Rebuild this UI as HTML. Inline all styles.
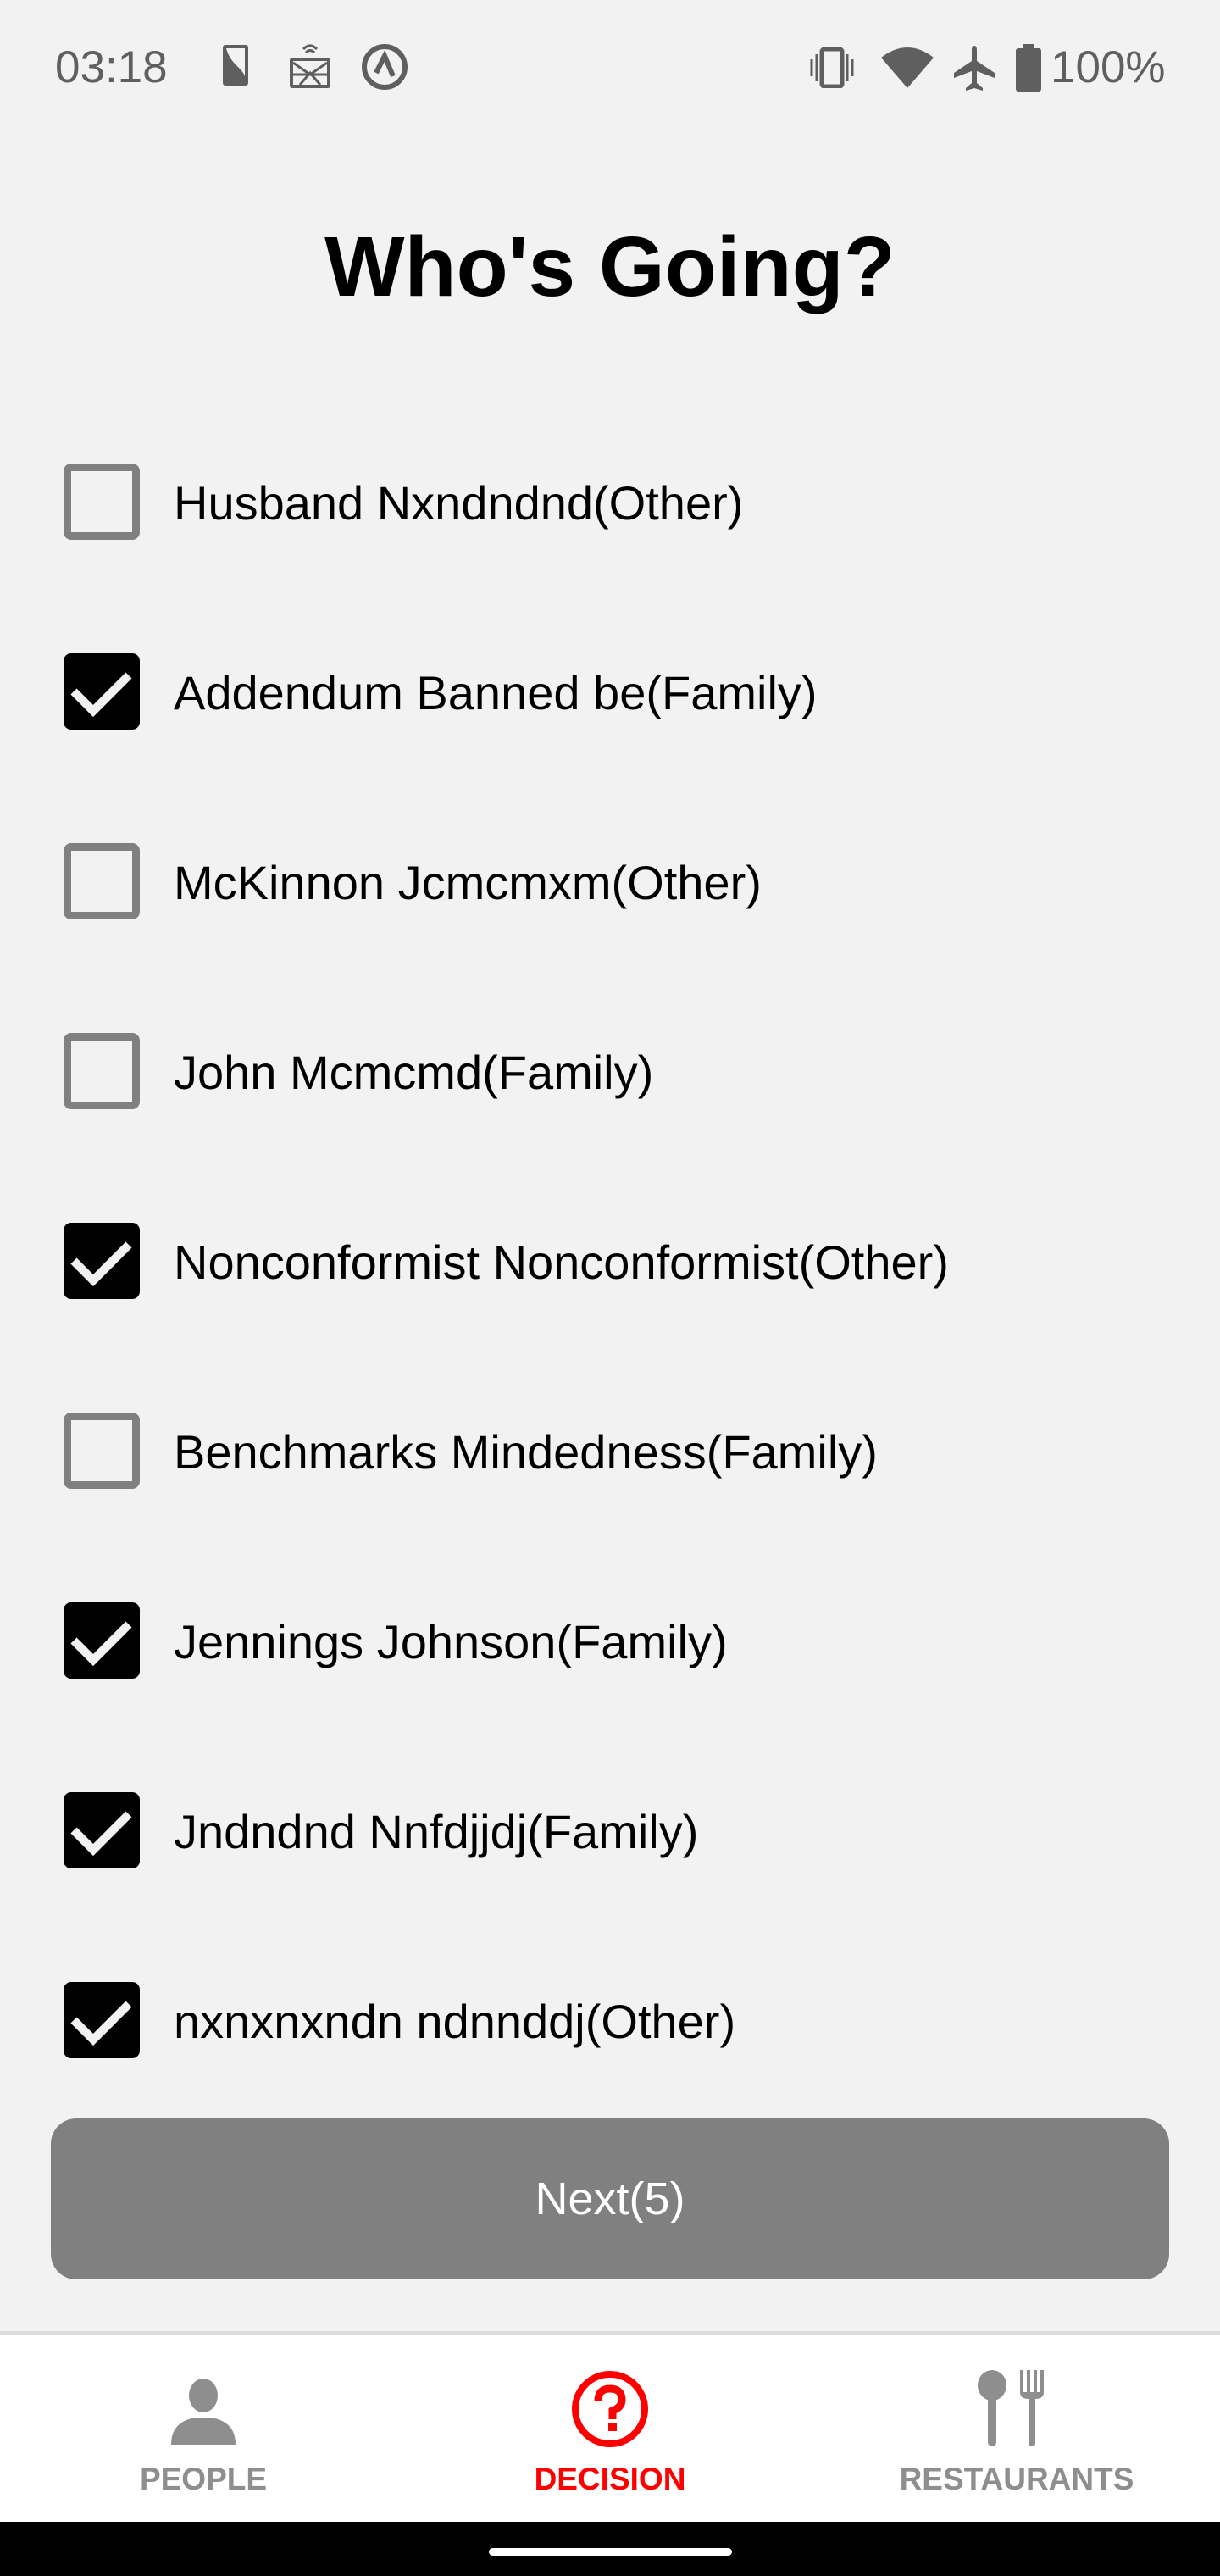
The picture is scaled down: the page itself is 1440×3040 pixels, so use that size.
<!DOCTYPE html>
<html><head><meta charset="utf-8"><style>
html,body{margin:0;padding:0}
body{width:1440px;height:3040px;background:#f2f2f2;position:relative;overflow:hidden;font-family:"Liberation Sans",sans-serif}
.abs{position:absolute}
.sb{color:#5f5f5f;font-size:53px;top:49px}
h1{position:absolute;top:258px;left:0;width:1440px;text-align:center;margin:0;font-size:100px;font-weight:bold;color:#000}
.row{position:absolute;left:75px;height:90px}
.cb{position:absolute;left:0;top:0;width:90px;height:90px;box-sizing:border-box;border-radius:9px}
.un{border:9px solid #808080}
.ck{background:#000}
.lbl{position:absolute;left:130px;top:2px;line-height:90px;font-size:56px;color:#000;white-space:nowrap}
.btn{position:absolute;left:60px;top:2500px;width:1320px;height:190px;border-radius:30px;background:#808080;color:#fff;font-size:54px;text-align:center;line-height:190px}
.nav{position:absolute;left:0;top:2751px;width:1440px;height:225px;background:#fff;border-top:4px solid #dcdcdc}
.nl{position:absolute;top:150px;width:480px;text-align:center;font-size:37px;font-weight:bold;color:#8e8e8e}
</style></head><body>
<div class="abs sb" style="left:65px">03:18</div>
<svg class="abs" style="left:262px;top:52px" width="32" height="50" viewBox="0 0 32 50"><rect x="1" y="1" width="30" height="48" rx="3" fill="#5f5f5f"/><path d="M5 5 H27 V38 C24 28 10 24 5 5Z" fill="#f2f2f2"/></svg>
<svg class="abs" style="left:340px;top:50px" width="52" height="56" viewBox="0 0 52 56"><path d="M18 8 Q26 0 34 8 M21 12 Q26 7 31 12" stroke="#5f5f5f" stroke-width="3" fill="none"/><rect x="2" y="18" width="48" height="36" rx="3" fill="#5f5f5f"/><rect x="6" y="22" width="40" height="28" fill="#f2f2f2"/><path d="M6 24 L26 38 L46 24 M14 50 L26 36 L38 50 M6 38 H46" stroke="#5f5f5f" stroke-width="3" fill="none"/></svg>
<svg class="abs" style="left:426px;top:50px" width="56" height="58" viewBox="0 0 56 58"><circle cx="28" cy="29" r="24" fill="none" stroke="#5f5f5f" stroke-width="6"/><path d="M18 36 L28 16 L38 40" stroke="#5f5f5f" stroke-width="6" fill="none"/></svg>
<svg class="abs" style="left:954px;top:56px" width="56" height="48" viewBox="0 0 56 48"><rect x="16" y="2" width="24" height="44" rx="3" fill="none" stroke="#5f5f5f" stroke-width="5"/><path d="M4 14V34M10 8V40M46 8V40M52 14V34" stroke="#5f5f5f" stroke-width="3"/></svg>
<svg class="abs" style="left:1038px;top:54px" width="66" height="52" viewBox="0 0 66 52"><path d="M33 50 L2 14 Q33 -10 64 14Z" fill="#5f5f5f"/></svg>
<svg class="abs" style="left:1124px;top:52px" width="52" height="56" viewBox="0 0 52 56"><path d="M26 2 C23 2 23 6 23 8 V20 L2 34 V40 L23 32 V46 L16 52 V55 L26 52 L36 55 V52 L29 46 V32 L50 40 V34 L29 20 V8 C29 6 29 2 26 2Z" fill="#5f5f5f"/></svg>
<svg class="abs" style="left:1198px;top:52px" width="32" height="56" viewBox="0 0 32 56"><rect x="10" y="0" width="12" height="6" fill="#5f5f5f"/><rect x="1" y="5" width="30" height="51" rx="3" fill="#5f5f5f"/></svg>
<div class="abs sb" style="left:1240px">100%</div>
<h1>Who's Going?</h1>
<div class="row" style="top:547px"><div class="cb un"></div><div class="lbl">Husband Nxndndnd(Other)</div></div>
<div class="row" style="top:771px"><div class="cb ck"><svg width="90" height="90" viewBox="0 0 90 90"><path d="M12 45 L35 68 L77 26" stroke="#f2f2f2" stroke-width="10" fill="none"/></svg></div><div class="lbl">Addendum Banned be(Family)</div></div>
<div class="row" style="top:995px"><div class="cb un"></div><div class="lbl">McKinnon Jcmcmxm(Other)</div></div>
<div class="row" style="top:1219px"><div class="cb un"></div><div class="lbl">John Mcmcmd(Family)</div></div>
<div class="row" style="top:1443px"><div class="cb ck"><svg width="90" height="90" viewBox="0 0 90 90"><path d="M12 45 L35 68 L77 26" stroke="#f2f2f2" stroke-width="10" fill="none"/></svg></div><div class="lbl">Nonconformist Nonconformist(Other)</div></div>
<div class="row" style="top:1667px"><div class="cb un"></div><div class="lbl">Benchmarks Mindedness(Family)</div></div>
<div class="row" style="top:1891px"><div class="cb ck"><svg width="90" height="90" viewBox="0 0 90 90"><path d="M12 45 L35 68 L77 26" stroke="#f2f2f2" stroke-width="10" fill="none"/></svg></div><div class="lbl">Jennings Johnson(Family)</div></div>
<div class="row" style="top:2115px"><div class="cb ck"><svg width="90" height="90" viewBox="0 0 90 90"><path d="M12 45 L35 68 L77 26" stroke="#f2f2f2" stroke-width="10" fill="none"/></svg></div><div class="lbl">Jndndnd Nnfdjjdj(Family)</div></div>
<div class="row" style="top:2339px"><div class="cb ck"><svg width="90" height="90" viewBox="0 0 90 90"><path d="M12 45 L35 68 L77 26" stroke="#f2f2f2" stroke-width="10" fill="none"/></svg></div><div class="lbl">nxnxnxndn ndnnddj(Other)</div></div>
<div class="btn">Next(5)</div>
<div class="nav">
<svg class="abs" style="left:200px;top:50px" width="80" height="80" viewBox="0 0 80 80"><ellipse cx="40" cy="22" rx="17" ry="20" fill="#8e8e8e"/><path d="M2 80 Q2 52 32 48 H48 Q78 52 78 80Z" fill="#8e8e8e"/></svg>
<svg class="abs" style="left:674px;top:42px" width="92" height="92" viewBox="0 0 92 92"><circle cx="46" cy="46" r="41" fill="none" stroke="#ff0000" stroke-width="8"/><path d="M32 36 Q32 22 46 22 Q60 22 60 35 Q60 44 49 48 V58" stroke="#ff0000" stroke-width="9" fill="none"/><rect x="44" y="63" width="10" height="9" fill="#ff0000"/></svg>
<svg class="abs" style="left:1150px;top:42px" width="86" height="90" viewBox="0 0 86 90"><ellipse cx="21" cy="18" rx="17" ry="18" fill="#8e8e8e"/><rect x="16" y="30" width="10" height="60" rx="5" fill="#8e8e8e"/><path d="M54 0 V26 Q54 34 64 34 V86 Q64 90 68 90 Q72 90 72 86 V34 Q82 34 82 26 V0 H78 V26 H74 V0 H70 V26 H66 V0 H62 V26 H58 V0Z" fill="#8e8e8e"/></svg>
<div class="nl" style="left:0">PEOPLE</div>
<div class="nl" style="left:480px;color:#ff0000">DECISION</div>
<div class="nl" style="left:960px">RESTAURANTS</div>
</div>
<div class="abs" style="left:0;top:2976px;width:1440px;height:64px;background:#000"></div>
<div class="abs" style="left:577px;top:3007px;width:287px;height:9px;border-radius:5px;background:#fff"></div>
</body></html>
